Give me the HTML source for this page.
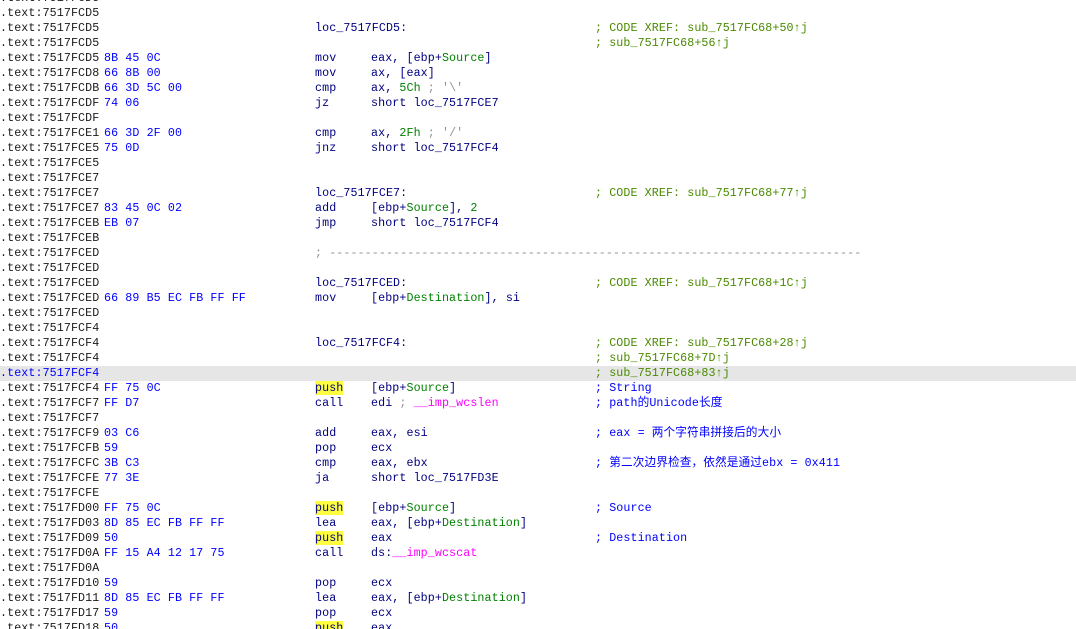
<!DOCTYPE html>
<html><head><meta charset="utf-8"><style>
html,body{margin:0;padding:0;background:#fff;width:1076px;height:628px;overflow:hidden}
html{position:relative}
body{position:absolute;top:1px;left:0}
.r{position:absolute;left:0;width:1076px;height:15px;font-family:"Liberation Mono","Noto Sans CJK SC",monospace;font-size:11.67px;line-height:15px;color:#000080;white-space:pre;letter-spacing:0.1px}
.r i{font-style:normal;position:absolute;top:0}
.a{left:0;color:#1a1a1a}
.bb{left:104px;color:#0000ff}
.mn{left:315px}
.op{left:371px}
.cm{left:595px;color:#0000ff}
.x{color:#4a8a00!important}
.g{color:#008000}
.gr{color:#909090!important}
.m{color:#ff00ff}
.y{background:#ffff40}
.h{background:#e6e6e6}
.h .a{color:#0000ff}
</style></head><body>
<div class="r" style="top:-10px"><i class="a">.text:7517FCD5</i></div>
<div class="r" style="top:5px"><i class="a">.text:7517FCD5</i></div>
<div class="r" style="top:20px"><i class="a">.text:7517FCD5</i><i class="mn">loc_7517FCD5:</i><i class="cm x">; CODE XREF: sub_7517FC68+50↑j</i></div>
<div class="r" style="top:35px"><i class="a">.text:7517FCD5</i><i class="cm x">; sub_7517FC68+56↑j</i></div>
<div class="r" style="top:50px"><i class="a">.text:7517FCD5</i><i class="bb">8B 45 0C</i><i class="mn">mov</i><i class="op">eax, [ebp+<span class="g">Source</span>]</i></div>
<div class="r" style="top:65px"><i class="a">.text:7517FCD8</i><i class="bb">66 8B 00</i><i class="mn">mov</i><i class="op">ax, [eax]</i></div>
<div class="r" style="top:80px"><i class="a">.text:7517FCDB</i><i class="bb">66 3D 5C 00</i><i class="mn">cmp</i><i class="op">ax, <span class="g">5Ch</span> <span style="color:#909090">; '\'</span></i></div>
<div class="r" style="top:95px"><i class="a">.text:7517FCDF</i><i class="bb">74 06</i><i class="mn">jz</i><i class="op">short loc_7517FCE7</i></div>
<div class="r" style="top:110px"><i class="a">.text:7517FCDF</i></div>
<div class="r" style="top:125px"><i class="a">.text:7517FCE1</i><i class="bb">66 3D 2F 00</i><i class="mn">cmp</i><i class="op">ax, <span class="g">2Fh</span> <span style="color:#909090">; '/'</span></i></div>
<div class="r" style="top:140px"><i class="a">.text:7517FCE5</i><i class="bb">75 0D</i><i class="mn">jnz</i><i class="op">short loc_7517FCF4</i></div>
<div class="r" style="top:155px"><i class="a">.text:7517FCE5</i></div>
<div class="r" style="top:170px"><i class="a">.text:7517FCE7</i></div>
<div class="r" style="top:185px"><i class="a">.text:7517FCE7</i><i class="mn">loc_7517FCE7:</i><i class="cm x">; CODE XREF: sub_7517FC68+77↑j</i></div>
<div class="r" style="top:200px"><i class="a">.text:7517FCE7</i><i class="bb">83 45 0C 02</i><i class="mn">add</i><i class="op">[ebp+<span class="g">Source</span>], <span class="g">2</span></i></div>
<div class="r" style="top:215px"><i class="a">.text:7517FCEB</i><i class="bb">EB 07</i><i class="mn">jmp</i><i class="op">short loc_7517FCF4</i></div>
<div class="r" style="top:230px"><i class="a">.text:7517FCEB</i></div>
<div class="r" style="top:245px"><i class="a">.text:7517FCED</i><i class="mn gr">; ---------------------------------------------------------------------------</i></div>
<div class="r" style="top:260px"><i class="a">.text:7517FCED</i></div>
<div class="r" style="top:275px"><i class="a">.text:7517FCED</i><i class="mn">loc_7517FCED:</i><i class="cm x">; CODE XREF: sub_7517FC68+1C↑j</i></div>
<div class="r" style="top:290px"><i class="a">.text:7517FCED</i><i class="bb">66 89 B5 EC FB FF FF</i><i class="mn">mov</i><i class="op">[ebp+<span class="g">Destination</span>], si</i></div>
<div class="r" style="top:305px"><i class="a">.text:7517FCED</i></div>
<div class="r" style="top:320px"><i class="a">.text:7517FCF4</i></div>
<div class="r" style="top:335px"><i class="a">.text:7517FCF4</i><i class="mn">loc_7517FCF4:</i><i class="cm x">; CODE XREF: sub_7517FC68+28↑j</i></div>
<div class="r" style="top:350px"><i class="a">.text:7517FCF4</i><i class="cm x">; sub_7517FC68+7D↑j</i></div>
<div class="r h" style="top:365px"><i class="a">.text:7517FCF4</i><i class="cm x">; sub_7517FC68+83↑j</i></div>
<div class="r" style="top:380px"><i class="a">.text:7517FCF4</i><i class="bb">FF 75 0C</i><i class="mn"><span class="y">push</span></i><i class="op">[ebp+<span class="g">Source</span>]</i><i class="cm">; String</i></div>
<div class="r" style="top:395px"><i class="a">.text:7517FCF7</i><i class="bb">FF D7</i><i class="mn">call</i><i class="op">edi <span style="color:#909090">;</span> <span class="m">__imp_wcslen</span></i><i class="cm">; path的Unicode长度</i></div>
<div class="r" style="top:410px"><i class="a">.text:7517FCF7</i></div>
<div class="r" style="top:425px"><i class="a">.text:7517FCF9</i><i class="bb">03 C6</i><i class="mn">add</i><i class="op">eax, esi</i><i class="cm">; eax = 两个字符串拼接后的大小</i></div>
<div class="r" style="top:440px"><i class="a">.text:7517FCFB</i><i class="bb">59</i><i class="mn">pop</i><i class="op">ecx</i></div>
<div class="r" style="top:455px"><i class="a">.text:7517FCFC</i><i class="bb">3B C3</i><i class="mn">cmp</i><i class="op">eax, ebx</i><i class="cm">; 第二次边界检查，依然是通过ebx = 0x411</i></div>
<div class="r" style="top:470px"><i class="a">.text:7517FCFE</i><i class="bb">77 3E</i><i class="mn">ja</i><i class="op">short loc_7517FD3E</i></div>
<div class="r" style="top:485px"><i class="a">.text:7517FCFE</i></div>
<div class="r" style="top:500px"><i class="a">.text:7517FD00</i><i class="bb">FF 75 0C</i><i class="mn"><span class="y">push</span></i><i class="op">[ebp+<span class="g">Source</span>]</i><i class="cm">; Source</i></div>
<div class="r" style="top:515px"><i class="a">.text:7517FD03</i><i class="bb">8D 85 EC FB FF FF</i><i class="mn">lea</i><i class="op">eax, [ebp+<span class="g">Destination</span>]</i></div>
<div class="r" style="top:530px"><i class="a">.text:7517FD09</i><i class="bb">50</i><i class="mn"><span class="y">push</span></i><i class="op">eax</i><i class="cm">; Destination</i></div>
<div class="r" style="top:545px"><i class="a">.text:7517FD0A</i><i class="bb">FF 15 A4 12 17 75</i><i class="mn">call</i><i class="op">ds:<span class="m">__imp_wcscat</span></i></div>
<div class="r" style="top:560px"><i class="a">.text:7517FD0A</i></div>
<div class="r" style="top:575px"><i class="a">.text:7517FD10</i><i class="bb">59</i><i class="mn">pop</i><i class="op">ecx</i></div>
<div class="r" style="top:590px"><i class="a">.text:7517FD11</i><i class="bb">8D 85 EC FB FF FF</i><i class="mn">lea</i><i class="op">eax, [ebp+<span class="g">Destination</span>]</i></div>
<div class="r" style="top:605px"><i class="a">.text:7517FD17</i><i class="bb">59</i><i class="mn">pop</i><i class="op">ecx</i></div>
<div class="r" style="top:620px"><i class="a">.text:7517FD18</i><i class="bb">50</i><i class="mn"><span class="y">push</span></i><i class="op">eax</i></div>
</body></html>
